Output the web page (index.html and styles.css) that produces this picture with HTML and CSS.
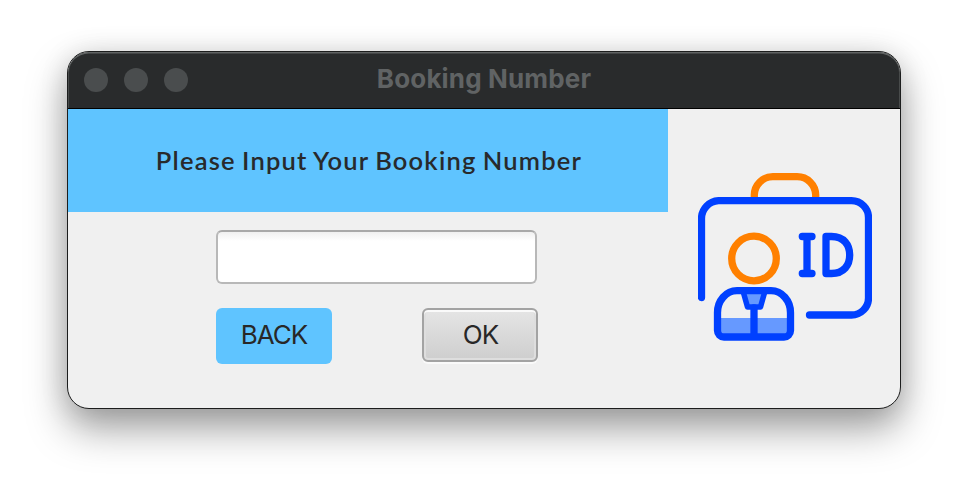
FILE: index.html
```html
<!DOCTYPE html>
<html lang="en">
<head>
<meta charset="utf-8">
<title>Booking Number</title>
<link rel="stylesheet" href="styles.css">
</head>
<body>
<main class="window">
  <header class="titlebar">
    <div class="lights"><i></i><i></i><i></i></div>
    <h1 class="title"><span>Booking Number</span></h1>
  </header>
  <div class="content">
    <section class="form">
      <div class="banner"><span>Please Input Your Booking Number</span></div>
      <div class="fields">
        <input class="input" type="text" aria-label="Booking number">
        <div class="actions">
          <button class="btn back"><span>BACK</span></button>
          <button class="btn ok"><span>OK</span></button>
        </div>
      </div>
    </section>
    <aside class="picture">
      <svg class="badge" viewBox="0 0 174 168" fill="none" stroke="#0040ff" stroke-width="7.3" stroke-linecap="round" stroke-linejoin="round">
        <path d="M56.3 24V22A18.5 18.5 0 0 1 74.8 3.7H99.2A18.5 18.5 0 0 1 117.7 22V24" stroke="#ff8000" stroke-linecap="butt"/>
        <path d="M3.5 124.5V45.500A18 18 0 0 1 20.500 27.700H153.500A17 17 0 0 1 170.500 45V125A17 17 0 0 1 153.500 142H111.500"/>
        <circle cx="56" cy="85.500" r="22.300" stroke="#ff8000"/>
        <path d="M20 145H92V161H20Z" fill="#6699ff" stroke="none"/>
        <path d="M45 118H67L62.500 134H49.500Z" fill="#6699ff" stroke-width="5.500"/>
        <path d="M56 135V160M39 117.700H73A19.500 22 0 0 1 92.500 140V157.500A6.500 6.500 0 0 1 86 164H26A6.500 6.500 0 0 1 19.500 157.500V140A19.500 22 0 0 1 39 117.700Z"/>
        <path d="M104.300 63.500H114M109 63.500V100.500M104.300 100.500H114M128 63.500H133.500C146 63.500 151.700 72 151.700 82S146 100.500 133.500 100.500H128Z"/>
      </svg>
    </aside>
  </div>
</main>
</body>
</html>
```

FILE: styles.css
```css
* { box-sizing: border-box; }
body {
  margin: 0;
  height: 492px;
  padding: 51px 67px;
  background: #fff;
  overflow: hidden;
  font-family: Inter, "Liberation Sans", sans-serif;
}
.window {
  width: 834px;
  height: 358px;
  border: 1px solid #1c1d1d;
  border-radius: 22px;
  overflow: hidden;
  background: #f0f0f0;
  box-shadow: 0 20px 40px rgba(0, 0, 0, .36), 0 3px 28px rgba(0, 0, 0, .13);
}
.titlebar {
  height: 57px;
  display: grid;
  grid-template-columns: 140px 1fr 140px;
  align-items: center;
  background: #292b2c;
  border-bottom: 1px solid #000;
  border-radius: 21px 21px 0 0;
  box-shadow: inset 0 2px 0 -0.5px #606363, inset 1px 0 0 #484b4b, inset -1px 0 0 #484b4b;
}
.lights { display: flex; gap: 16px; padding-left: 16px; }
.lights i { width: 24px; height: 24px; border-radius: 50%; background: #4a4d4e; }
.title {
  margin: 0;
  padding-bottom: 2px;
  text-align: center;
  font-size: 26px;
  line-height: 32px;
  font-weight: 700;
  letter-spacing: .15px;
  color: #606364;
  white-space: nowrap;
}
.content { display: flex; height: 299px; }
.form { width: 600px; }
.banner {
  height: 103px;
  padding: 0 0 2px 2px;
  display: flex;
  align-items: center;
  justify-content: center;
  background: #5fc4ff;
  font: 600 25.5px/34px Lato, "Open Sans", sans-serif;
  letter-spacing: 1.2px;
  word-spacing: -1.2px;
  color: #282a2c;
  white-space: nowrap;
}
.fields { width: 322px; margin: 18px 0 0 148px; }
.input {
  display: block;
  width: 321px;
  height: 54px;
  padding: 0 12px;
  border: 2px solid #b8b8b8;
  border-top-color: #a9a9a9;
  border-radius: 6px;
  background: linear-gradient(#f0f0f0, #fff 9px);
  font: inherit;
}
.actions { display: flex; justify-content: space-between; margin-top: 24px; }
.btn {
  width: 116px;
  height: 56px;
  padding: 0 0 2px;
  border: 0;
  border-radius: 6px;
  font: 400 26px/32px Inter, sans-serif;
  letter-spacing: -1px;
  color: #282828;
}
.back { background: #5fc4ff; }
.ok {
  height: 54px;
  padding: 0 0 0 1px;
  border: 2px solid #a3a3a3;
  background: linear-gradient(#e5e5e5, #cecece);
  box-shadow: inset 0 2px 0 #fafafa, inset 0 0 0 2px #dedede, 0 2px 0 #fafafa;
}
.picture { width: 232px; padding: 64px 0 0 30px; }
.badge { display: block; width: 174px; height: 168px; }
```
